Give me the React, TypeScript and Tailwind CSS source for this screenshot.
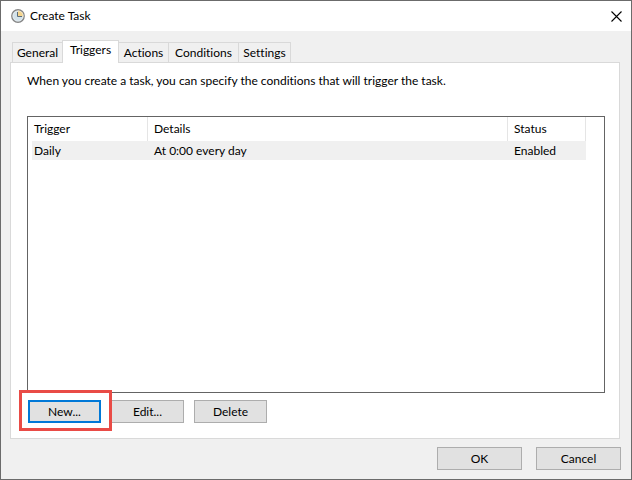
import type { ReactNode } from "react";

const inactiveTabs = [
  { label: "Actions", width: "w-[50px]" },
  { label: "Conditions", width: "w-[70px]" },
  { label: "Settings", width: "w-[52px]" },
];

function ClockIcon() {
  return (
    <svg width="14" height="14" viewBox="0 0 14 14" aria-hidden="true">
      <circle cx="7" cy="7" r="6.2" fill="#d3e2ea" stroke="#858585" strokeWidth="1.4" />
      <path d="M7 7.5V1.6A5.4 5.4 0 0 1 12.4 7.5Z" fill="#f5d48c" />
      <circle cx="7" cy="7" r="5.1" fill="none" stroke="#f4f4f4" strokeWidth="0.5" />
      <path d="M6.5 3v4.5H11" fill="none" stroke="#5a6c7a" strokeWidth="1" />
    </svg>
  );
}

function CloseIcon() {
  return (
    <svg width="11" height="11" viewBox="0 0 11 11" aria-hidden="true">
      <path d="M0.5 0.5l10 10M10.5 0.5l-10 10" stroke="#000" strokeWidth="1.1" fill="none" />
    </svg>
  );
}

function PushButton({ children, className }: { children: ReactNode; className: string }) {
  return (
    <button type="button" className={`flex h-[23px] items-center justify-center bg-[#e1e1e1] ${className}`}>
      {children}
    </button>
  );
}

export default function App() {
  return (
    <div className="flex min-h-screen flex-col border border-[#6b6b6b] bg-[#f0f0f0] font-['Lato','Open_Sans',sans-serif] text-xs leading-4 text-black [font-variant-ligatures:none]">
      <header className="flex h-[30px] items-center bg-white pr-[9px] pl-2.5">
        <ClockIcon />
        <h1 className="ml-[5px] flex-1">Create Task</h1>
        <button type="button" aria-label="Close">
          <CloseIcon />
        </button>
      </header>

      <main className="flex flex-1 flex-col py-[9px] pr-[11px] pl-[9px]">
        <div role="tablist" className="z-10 -mb-px flex items-end pl-0.5">
          <button type="button" role="tab" aria-selected="false" className="mb-px h-5 w-[50px] border-t border-l border-[#d9d9d9]">
            General
          </button>
          <button
            type="button"
            role="tab"
            aria-selected="true"
            className="h-[23px] w-[57px] border border-b-0 border-[#d9d9d9] bg-white pb-1"
          >
            Triggers
          </button>
          {inactiveTabs.map((tab) => (
            <button
              key={tab.label}
              type="button"
              role="tab"
              aria-selected="false"
              className={`mb-px h-5 border-t border-r border-[#d9d9d9] ${tab.width}`}
            >
              {tab.label}
            </button>
          ))}
        </div>

        <section role="tabpanel" className="flex flex-1 flex-col border border-[#d9d9d9] bg-white pt-2.5 pr-3.5 pb-[15px] pl-4">
          <p>When you create a task, you can specify the conditions that will trigger the task.</p>

          <div className="mt-[27px] flex-1 border border-[#646464] pr-[18px] pl-1">
            <table className="w-full table-fixed border-separate border-spacing-0 text-left">
              <colgroup>
                <col className="w-[116px]" />
                <col />
                <col className="w-[78px]" />
              </colgroup>
              <thead>
                <tr className="h-6">
                  <th className="border-r border-[#e5e5e5] p-0 pl-0.5 font-normal">Trigger</th>
                  <th className="border-r border-[#e5e5e5] p-0 pl-1.5 font-normal">Details</th>
                  <th className="border-r border-[#e5e5e5] p-0 pl-1.5 font-normal">Status</th>
                </tr>
              </thead>
              <tbody>
                <tr className="h-[19px] bg-[#f0f0f0]">
                  <td className="p-0 pl-0.5">Daily</td>
                  <td className="p-0 pl-1.5">At 0:00 every day</td>
                  <td className="p-0 pl-1.5">Enabled</td>
                </tr>
              </tbody>
            </table>
          </div>

          <div className="mt-[7px] flex gap-2.5 pl-px">
            <div className="relative">
              <PushButton className="w-[73px] border-2 border-[#0078d7]">New...</PushButton>
              <div className="pointer-events-none absolute -top-2.5 -right-[11px] -bottom-2 -left-[9px] border-[3px] border-[#e94b46]" />
            </div>
            <PushButton className="w-[73px] border border-[#adadad]">Edit...</PushButton>
            <PushButton className="w-[73px] border border-[#adadad]">Delete</PushButton>
          </div>
        </section>

        <footer className="mt-2 -mr-px flex justify-end gap-3.5">
          <PushButton className="w-[85px] border border-[#adadad]">OK</PushButton>
          <PushButton className="w-[85px] border border-[#adadad]">Cancel</PushButton>
        </footer>
      </main>
    </div>
  );
}
